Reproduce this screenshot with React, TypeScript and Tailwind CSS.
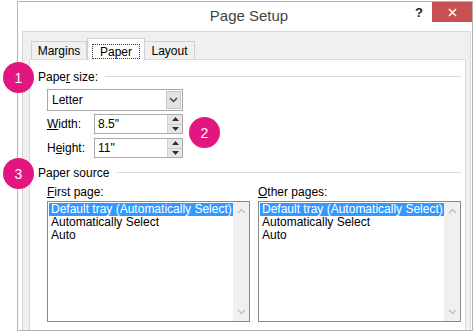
import React from "react";

const font = "font-['Liberation_Sans','Segoe_UI',Arial,sans-serif]";

function Badge({ n, className }: { n: string; className: string }) {
  return (
    <div
      className={`absolute flex items-center justify-center rounded-full bg-[#e3157f] text-[14px] leading-none text-white ${className}`}
    >
      {n}
    </div>
  );
}

function Spinner() {
  return (
    <div className="flex w-[15px] flex-col border-l border-[#d0d0d0] bg-[#e6e6e6]">
      <div className="flex flex-1 items-center justify-center border-b border-[#c8c8c8]">
        <svg width="7" height="4" viewBox="0 0 7 4">
          <path d="M0 4 L3.5 0 L7 4 Z" fill="#333" />
        </svg>
      </div>
      <div className="flex flex-1 items-center justify-center">
        <svg width="7" height="4" viewBox="0 0 7 4">
          <path d="M0 0 L3.5 4 L7 0 Z" fill="#333" />
        </svg>
      </div>
    </div>
  );
}

function Chevron({ up, color }: { up?: boolean; color: string }) {
  return (
    <svg width="9" height="6" viewBox="0 0 9 6">
      <path
        d={up ? "M1 5 L4.5 1.5 L8 5" : "M1 1 L4.5 4.5 L8 1"}
        fill="none"
        stroke={color}
        strokeWidth="1.5"
      />
    </svg>
  );
}

function ListBox() {
  const items = ["Default tray (Automatically Select)", "Automatically Select", "Auto"];
  return (
    <div className="flex h-[121px] w-[203px] border border-[#8a8a8a] bg-white">
      <div className="flex flex-1 flex-col items-start pl-[1px] pt-[1px]">
        {items.map((t, i) => (
          <div
            key={t}
            className={`h-[13px] pl-[2px] pr-[1px] text-[12px] leading-[13px] ${
              i === 0 ? "bg-[#3399ff] text-white" : "text-black"
            }`}
          >
            {t}
          </div>
        ))}
      </div>
      <div className="flex w-[16px] flex-col items-center justify-between bg-[#f0f0f0] py-[6px]">
        <Chevron up color="#c2c2c2" />
        <Chevron color="#c2c2c2" />
      </div>
    </div>
  );
}

export default function App() {
  return (
    <div className={`relative h-[331px] w-[474px] overflow-hidden bg-white text-black ${font}`}>
      {/* dialog window */}
      <div className="ml-[17px] mt-[1px] flex h-[330px] w-[456px] flex-col border border-[#b4b4b4] bg-white">
        {/* title bar */}
        <div className="flex h-[29px] items-start">
          <div className="flex h-[29px] flex-1 items-center justify-center pl-[74px] pb-[1px] text-[15px] text-[#444]">
            Page Setup
          </div>
          <div className="flex h-[20px] w-[26px] items-center justify-center pt-[2px] text-[13px] font-bold text-[#222]">
            ?
          </div>
          <div className="flex h-[20px] w-[40px] items-center justify-center bg-[#c75050]">
            <svg width="9" height="9" viewBox="0 0 9 9">
              <path d="M1 1 L8 8 M8 1 L1 8" stroke="white" strokeWidth="1.6" />
            </svg>
          </div>
        </div>

        {/* body frame */}
        <div className="ml-[4px] mr-[1px] flex flex-1 flex-col border-x border-t border-[#dadada] bg-[#f0f0f0]">
          {/* tabs */}
          <div className="mt-[6px] flex items-end pl-[8px]">
            <div className="flex h-[18px] w-[56px] items-center justify-center border-x border-t border-[#d0d0d0] bg-[#f0f0f0] text-[12px]">
              Margins
            </div>
            <div className="relative z-10 -mb-px flex h-[22px] w-[58px] items-start justify-center border-x border-t border-[#d0d0d0] bg-white pt-[5px]">
              <div className="flex h-[15px] w-[48px] items-center justify-center border border-dotted border-[#333] text-[12px]">
                Paper
              </div>
            </div>
            <div className="flex h-[18px] w-[50px] items-center justify-center border-r border-t border-[#d0d0d0] bg-[#f0f0f0] text-[12px]">
              Layout
            </div>
          </div>

          {/* tab panel */}
          <div className="ml-[6px] mr-[4px] flex-1 border-x border-t border-[#d9d9d9] bg-white pl-[8px] pr-[4px] text-[12px]">
            <div className="mt-[9px] flex h-[15px] items-center">
              <span>
                Pape<span className="underline">r</span> size:
              </span>
              <div className="ml-[7px] h-px flex-1 bg-[#dcdcdc]" />
            </div>

            <div className="ml-[9px] mt-[5px] flex h-[22px] w-[136px] border border-[#a9a9a9] bg-white">
              <div className="flex flex-1 items-center pl-[4px]">Letter</div>
              <div className="m-[1px] flex w-[15px] items-center justify-center border border-[#c8c8c8] bg-[#e3e3e3]">
                <Chevron color="#444" />
              </div>
            </div>

            <div className="ml-[9px] mt-[3px] flex h-[20px] items-center">
              <div className="w-[47px]">
                <span className="underline">W</span>idth:
              </div>
              <div className="flex h-[20px] w-[89px] border border-[#a9a9a9] bg-white">
                <div className="flex flex-1 items-center pl-[3px]">8.5"</div>
                <Spinner />
              </div>
            </div>

            <div className="ml-[9px] mt-[4px] flex h-[20px] items-center">
              <div className="w-[47px]">
                H<span className="underline">e</span>ight:
              </div>
              <div className="flex h-[20px] w-[89px] border border-[#a9a9a9] bg-white">
                <div className="flex flex-1 items-center pl-[3px]">11"</div>
                <Spinner />
              </div>
            </div>

            <div className="mt-[7px] flex h-[15px] items-center">
              <span>Paper source</span>
              <div className="ml-[7px] h-px flex-1 bg-[#dcdcdc]" />
            </div>

            <div className="ml-[9px] mt-[5px] flex gap-[8px]">
              <div className="flex flex-col">
                <div className="h-[16px] leading-[15px]">
                  <span className="underline">F</span>irst page:
                </div>
                <ListBox />
              </div>
              <div className="flex flex-col">
                <div className="h-[16px] leading-[15px]">
                  <span className="underline">O</span>ther pages:
                </div>
                <ListBox />
              </div>
            </div>
          </div>
        </div>
      </div>

      {/* callout badges */}
      <Badge n="1" className="left-[3px] top-[62px] h-[31px] w-[31px]" />
      <Badge n="2" className="left-[189px] top-[117px] h-[31px] w-[31px]" />
      <Badge n="3" className="left-[3px] top-[158px] h-[31px] w-[31px]" />
    </div>
  );
}
